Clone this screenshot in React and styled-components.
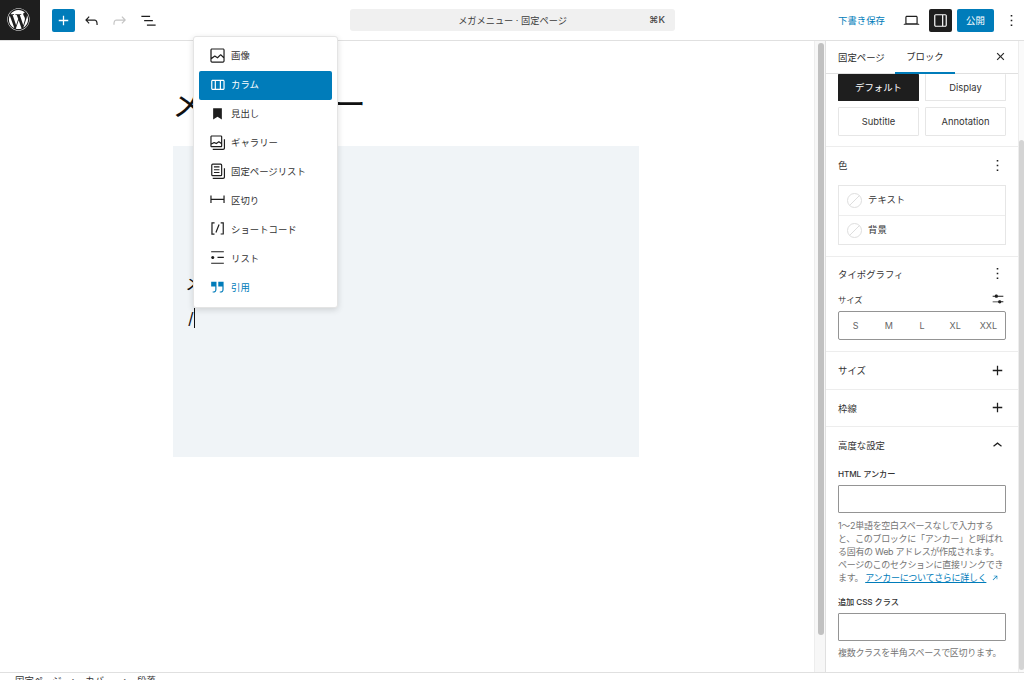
import React from 'react'
import styled, { createGlobalStyle } from 'styled-components'
import { FaWordpress } from 'react-icons/fa'

const GlobalStyle = createGlobalStyle`
    html, body {
        margin: 0;
        padding: 0;
        height: 100%;
        overflow: hidden;
        background: #fff;
    }
    body {
        font-family: 'Inter', 'Noto Sans CJK JP', sans-serif;
        color: #1e1e1e;
    }
    * {
        box-sizing: border-box;
    }
`

const icons = {
    plus: 'M18 11.2h-5.2V6h-1.6v5.2H6v1.6h5.2V18h1.6v-5.2H18z',
    undo: 'M18.3 11.7c-.6-.6-1.4-.9-2.3-.9H6.7l2.9-3.3-1.1-1-4.5 5L8.5 16l1-1-2.7-2.7H16c.5 0 .9.2 1.3.5 1 1 1 3.4 1 4.5v.3h1.5v-.2c0-1.5 0-4.3-1.5-5.7z',
    redo: 'M15.6 6.5l-1.1 1 2.9 3.3H8c-.9 0-1.7.3-2.3.9-1.4 1.5-1.4 4.2-1.4 5.6v.2h1.5v-.3c0-1.1 0-3.5 1-4.5.3-.3.7-.5 1.3-.5h9.2L14.5 15l1.1 1.1 4.6-4.6-4.6-5z',
    listView: 'M3 6h11v1.5H3V6Zm3.5 5.5h11V13h-11v-1.5ZM21 17H10v1.5h11V17Z',
    image: 'M19 3H5c-1.1 0-2 .9-2 2v14c0 1.1.9 2 2 2h14c1.1 0 2-.9 2-2V5c0-1.1-.9-2-2-2zM5 4.5h14c.3 0 .5.2.5.5v8.4l-3-2.9c-.3-.3-.8-.3-1 0L11.9 14 9 12c-.3-.2-.6-.2-.8 0l-3.6 2.6V5c-.1-.3.1-.5.4-.5zm14 15H5c-.3 0-.5-.2-.5-.5v-2.4l4.1-3 3 1.9c.3.2.7.2.9-.1L16 12l3.5 3.4V19c0 .3-.2.5-.5.5z',
    columns: 'M19 6H6c-1.1 0-2 .9-2 2v9c0 1.1.9 2 2 2h13c1.1 0 2-.9 2-2V8c0-1.1-.9-2-2-2zm-4.1 1.5v10H10v-10h4.9zM5.5 17V8c0-.3.2-.5.5-.5h2.5v10H6c-.3 0-.5-.2-.5-.5zm14 0c0 .3-.2.5-.5.5h-2.6v-10H19c.3 0 .5.2.5.5v9z',
    bookmark: 'M6.5 5.5h11v14L12 16l-5.5 3.5z',
    gallery: 'M16.375 4.5H4.625a.125.125 0 0 0-.125.125v8.254l2.859-1.54a.75.75 0 0 1 .68-.016l2.384 1.142 2.89-2.074a.75.75 0 0 1 .874 0l2.313 1.66V4.625a.125.125 0 0 0-.125-.125Zm.125 9.398-2.75-1.975-2.813 2.02a.75.75 0 0 1-.76.067l-2.444-1.17L4.5 14.583v1.792c0 .069.056.125.125.125h11.75a.125.125 0 0 0 .125-.125v-2.477ZM4.625 3C3.728 3 3 3.728 3 4.625v11.75C3 17.273 3.728 18 4.625 18h11.75c.898 0 1.625-.727 1.625-1.625V4.625C18 3.728 17.273 3 16.375 3H4.625ZM20 8v11c0 .69-.31 1-.999 1H6v1.5h13.001c1.52 0 2.499-.982 2.499-2.5V8H20Z',
    pages: 'M14.5 5.5h-7V7h7V5.5ZM7.5 9h7v1.5h-7V9Zm7 3.5h-7V14h7v-1.5ZM16 2H6a2 2 0 0 0-2 2v12a2 2 0 0 0 2 2h10a2 2 0 0 0 2-2V4a2 2 0 0 0-2-2ZM6 3.500h10a.5.5 0 0 1 .5.5v12a.5.5 0 0 1-.5.5H6a.5.5 0 0 1-.5-.5V4a.5.5 0 0 1 .5-.5ZM20 8v11c0 .69-.31 1-.999 1H6v1.5h13.001c1.52 0 2.499-.982 2.499-2.5V8H20Z',
    separator: 'M4.5 12.5v4H3V7h1.5v3.987h15V7H21v9.5h-1.5v-4h-15Z',
    shortcode: 'M16 4.2v1.5h2.5v12.5H16v1.5h4V4.2h-4zM4.2 19.8h4v-1.5H5.8V5.8h2.5V4.2h-4l-.1 15.6zm5.1-3.1l1.4.6 4-10-1.4-.6-4 10z',
    list: 'M4 4v1.5h16V4H4zm8 8.5h8V11h-8v1.5zM4 20h16v-1.5H4V20zm4-8c0-1.1-.9-2-2-2s-2 .9-2 2 .9 2 2 2 2-.9 2-2z',
    quote: 'M13 6v6h5.2v4c0 .8-.2 1.4-.5 1.7-.6.6-1.6.6-2.5.5h-.3v1.5h.5c1 0 2.3-.1 3.3-1 .6-.6 1-1.6 1-2.8V6H13zm-9 6h5.2v4c0 .8-.2 1.4-.5 1.7-.6.6-1.6.6-2.5.5h-.3v1.5h.5c1 0 2.3-.1 3.3-1 .6-.6 1-1.6 1-2.8V6H4v6z',
    laptop: 'M20.5 16h-.7V8c0-1.1-.9-2-2-2H6.2c-1.1 0-2 .9-2 2v8h-.7c-.8 0-1.5.7-1.5 1.5h20c0-.8-.7-1.5-1.5-1.5zM5.700 8c0-.3.2-.5.5-.5h11.6c.3 0 .5.2.5.5v7.6H5.7V8z',
    drawer: 'M18 4H6c-1.1 0-2 .9-2 2v12c0 1.1.9 2 2 2h12c1.1 0 2-.9 2-2V6c0-1.1-.9-2-2-2zm-4 14.5H6c-.3 0-.5-.2-.5-.5V6c0-.3.2-.5.5-.5h8v13zm4.500-.5c0 .3-.2.5-.5.5h-2.5v-13H18c.3 0 .5.2.5.5v12z',
    close: 'M12 13.06l3.712 3.713 1.061-1.06L13.061 12l3.712-3.712-1.06-1.06L12 10.938 8.288 7.227l-1.061 1.06L10.939 12l-3.712 3.712 1.06 1.061L12 13.061z',
    more: 'M13 19h-2v-2h2v2zm0-6h-2v-2h2v2zm0-6h-2V5h2v2z',
    chevronUp: 'M6.5 12.4L12 8l5.5 4.4-.9 1.2L12 10l-4.5 3.6-1-1.2z',
    sliders: 'M14.5 13.8c-1.1 0-2.1.7-2.4 1.8H4V17h8.1c.3 1 1.3 1.8 2.4 1.8s2.1-.7 2.4-1.8H20v-1.5h-3.1c-.3-1-1.3-1.7-2.4-1.7zM11.9 7c-.3-1-1.3-1.8-2.4-1.8S7.4 6 7.1 7H4v1.5h3.1c.3 1 1.3 1.8 2.4 1.8s2.1-.7 2.4-1.8H20V7h-8.1z',
    external: 'M9 6.500h8.500V15H16V9.100l-8.400 8.400-1.100-1.100L14.900 8H9z',
}

const Svg = styled.svg`
    display: block;
    flex: none;
    fill: currentColor;
    width: ${p => p.$size || 19}px;
    height: ${p => p.$size || 19}px;
`

const Icon = ({ name, size }) => (
    <Svg viewBox='0 0 24 24' $size={size}>
        <path d={icons[name]} fillRule='evenodd' clipRule='evenodd' />
    </Svg>
)

const Page = styled.div`
    position: relative;
    width: 1024px;
    height: 680px;
    overflow: hidden;
    display: flex;
    flex-direction: column;
`

const Header = styled.header`
    display: flex;
    align-items: center;
    height: 41px;
    flex: none;
    border-bottom: 1px solid #e0e0e0;
`

const LogoBox = styled.div`
    width: 40px;
    height: 40px;
    flex: none;
    background: #1e1e1e;
    color: #fff;
    display: flex;
    align-items: center;
    justify-content: center;
    padding: 0 4px 2px 0;
`

const LeftTools = styled.div`
    display: flex;
    align-items: center;
    width: 310px;
    flex: none;
    padding-left: 12px;
`

const AddButton = styled.div`
    width: 23px;
    height: 23px;
    background: #007cba;
    color: #fff;
    border-radius: 2px;
    display: flex;
    align-items: center;
    justify-content: center;
    margin-right: 2px;
`

const ToolButton = styled.div`
    width: 28.500px;
    height: 23px;
    display: flex;
    align-items: center;
    justify-content: center;
    color: ${p => (p.$muted ? '#c4c4c4' : '#1e1e1e')};
`

const CommandBar = styled.div`
    width: 325px;
    height: 22px;
    flex: none;
    position: relative;
    background: #f0f0f0;
    border-radius: 3px;
    display: flex;
    align-items: center;
    justify-content: center;
    font-size: 9.2px;
    color: #3c3c3c;
    padding: 0 0 1px 0;
`

const Shortcut = styled.span`
    position: absolute;
    right: 10px;
    top: 5px;
    font-size: 9.5px;
    font-weight: 500;
    color: #444;
`

const RightTools = styled.div`
    flex: 1;
    display: flex;
    align-items: center;
    padding-left: 163px;
`

const SaveLink = styled.span`
    width: 62px;
    flex: none;
    font-size: 9.4px;
    color: #007cba;
`

const IconSquare = styled.div`
    width: 23px;
    height: 23px;
    flex: none;
    margin-left: ${p => p.$left || 0}px;
    display: flex;
    align-items: center;
    justify-content: center;
    border-radius: 2px;
    background: ${p => (p.$active ? '#1e1e1e' : 'transparent')};
    color: ${p => (p.$active ? '#fff' : '#1e1e1e')};
`

const PublishButton = styled.div`
    width: 37px;
    height: 23px;
    flex: none;
    margin: 0 5px;
    background: #007cba;
    color: #fff;
    border-radius: 2px;
    font-size: 9.4px;
    display: flex;
    align-items: center;
    justify-content: center;
`

const Body = styled.div`
    flex: 1;
    min-height: 0;
    display: flex;
`

const Canvas = styled.main`
    flex: 1;
    min-width: 0;
    padding: 44px 0 0 172px;
`

const Title = styled.h1`
    margin: 0 0 21px;
    font-size: 32.3px;
    line-height: 40px;
    font-weight: 400;
    color: #111;
`

const Group = styled.section`
    width: 466px;
    height: 311px;
    margin-left: 1px;
    background: #f0f4f7;
    padding: 121px 0 0 15px;
    font-size: 16px;
    line-height: 34px;
    color: #111;
`

const Paragraph = styled.p`
    margin: 0;
    font-size: ${p => p.$size || 16}px;
    text-indent: ${p => p.$indent || 0}px;
`

const Caret = styled.span`
    border-right: 1px solid #111;
`

const CanvasTrack = styled.div`
    width: 11px;
    flex: none;
    background: #f7f7f7;
    padding: 2px 1px 0 3px;
    border-left: 1px solid #ededed;
`

const CanvasThumb = styled.div`
    height: 592px;
    background: #c1c1c1;
    border-radius: 4px;
`

const Sidebar = styled.aside`
    width: 199px;
    flex: none;
    display: flex;
    border-left: 1px solid #e0e0e0;
`

const SidebarInner = styled.div`
    flex: 1;
    min-width: 0;
    display: flex;
    flex-direction: column;
    border-right: 1px solid #ededed;
`

const SidebarTrack = styled.div`
    width: 5px;
    flex: none;
    padding-top: 99px;
    background: #fafafa;
`

const SidebarThumb = styled.div`
    height: 530px;
    background: #d4d4d4;
    border-radius: 3px;
`

const Tabs = styled.div`
    height: 33px;
    flex: none;
    display: flex;
    align-items: center;
    border-bottom: 1px solid #e0e0e0;
    font-size: 9.4px;
    padding-left: 12px;
    color: #2a2a2a;
`

const Tab = styled.div`
    height: 33px;
    flex: none;
    width: ${p => p.$width}px;
    display: flex;
    align-items: center;
    justify-content: ${p => (p.$active ? 'center' : 'flex-start')};
    border-bottom: ${p => (p.$active ? '2px solid #007cba' : '0')};
    padding-bottom: 1px;
`

const TabClose = styled.div`
    margin-left: auto;
    margin-right: 8px;
    margin-bottom: 2px;
    display: flex;
`

const StylesGrid = styled.div`
    display: grid;
    grid-template-columns: 81px 81px;
    column-gap: 6px;
    row-gap: 6px;
    padding: 0 12px 10px;
    border-bottom: 1px solid #ededed;
    flex: none;
`

const StyleButton = styled.div`
    height: ${p => p.$height}px;
    display: flex;
    align-items: center;
    justify-content: center;
    font-size: 9.4px;
    border: 1px solid ${p => (p.$active ? '#1e1e1e' : '#e6e6e6')};
    border-top-width: ${p => (p.$clipped ? 0 : 1)}px;
    background: ${p => (p.$active ? '#1e1e1e' : '#fff')};
    color: ${p => (p.$active ? '#fff' : '#333')};
    border-radius: 1px;
`

const Panel = styled.section`
    flex: none;
    padding: 0 12px ${p => p.$bottom || 0}px;
    border-bottom: ${p => (p.$last ? '0' : '1px solid #ededed')};
`

const PanelHead = styled.div`
    height: ${p => p.$height || 37}px;
    display: flex;
    align-items: center;
    justify-content: space-between;
    font-size: 9.4px;
    color: #333;
    padding-bottom: 1px;
`

const PanelAction = styled.div`
    width: 19px;
    display: flex;
    justify-content: center;
    margin-right: -1px;
    color: #1e1e1e;
`

const ColorBox = styled.div`
    border: 1px solid #e6e6e6;
    margin-top: 1px;
`

const ColorRow = styled.div`
    height: 29px;
    display: flex;
    align-items: center;
    padding-left: 8px;
    gap: 6px;
    font-size: 9.4px;
    color: #333;
    & + & {
        border-top: 1px solid #ededed;
    }
`

const ColorLabel = styled.span`
    padding-bottom: 3px;
`

const Swatch = styled.span`
    width: 15px;
    height: 15px;
    flex: none;
    border-radius: 50%;
    border: 1px solid #dedede;
    background: linear-gradient(-45deg, transparent 47%, #dedede 47%, #dedede 53%, transparent 53%);
`

const SizeHead = styled.div`
    height: 16px;
    display: flex;
    align-items: center;
    justify-content: space-between;
    font-size: 8.2px;
    color: #333;
    margin-bottom: 4px;
`

const SizeControl = styled.div`
    height: 29px;
    border: 1px solid #949494;
    border-radius: 2px;
    display: grid;
    grid-template-columns: repeat(5, 1fr);
    align-items: center;
    justify-items: center;
    font-size: 9px;
    color: #666;
`

const FieldLabel = styled.div`
    font-size: 8.2px;
    line-height: 12px;
    font-weight: 500;
    letter-spacing: -0.1px;
    color: #333;
    margin: ${p => p.$top || 0}px 0 5px;
`

const TextBox = styled.div`
    height: 28px;
    border: 1px solid #949494;
    border-radius: 1px;
    background: #fff;
`

const Help = styled.p`
    margin: 5.5px 0 0;
    font-size: 9px;
    letter-spacing: -0.3px;
    line-height: 13px;
    white-space: nowrap;
    color: #757575;
    width: 168px;
`

const HelpLink = styled.span`
    color: #007cba;
    text-decoration: underline;
    margin-left: 2px;
`

const InlineIcon = styled.span`
    display: inline-block;
    vertical-align: -2px;
    color: #007cba;
    margin-left: 4px;
`

const Footer = styled.footer`
    height: 8px;
    flex: none;
    overflow: hidden;
    border-top: 1px solid #e0e0e0;
    padding: 2px 0 0 15px;
    display: flex;
    gap: 10px;
    font-size: 9.4px;
    line-height: 12px;
    color: #333;
`

const Menu = styled.div`
    position: absolute;
    left: 193px;
    top: 36px;
    width: 145px;
    height: 272px;
    background: #fff;
    border: 1px solid #e4e4e4;
    border-radius: 3px;
    box-shadow: 0 2px 6px rgba(0, 0, 0, 0.14);
    padding: 5px;
`

const MenuItem = styled.div`
    height: 28.9px;
    display: flex;
    align-items: center;
    gap: 4px;
    padding: 0 0 0 9px;
    border-radius: 2px;
    font-size: 9.4px;
    background: ${p => (p.$active ? '#007cba' : 'transparent')};
    color: ${p => (p.$active ? '#fff' : p.$link ? '#007cba' : '#333')};
`

const MenuLabel = styled.span`
    padding-bottom: 2px;
`

const MenuIcon = styled.span`
    display: flex;
    padding-bottom: 2px;
    color: ${p => (p.$active ? '#fff' : p.$link ? '#007cba' : '#1e1e1e')};
`

const menuItems = [
    { icon: 'image', label: '画像' },
    { icon: 'columns', label: 'カラム', active: true },
    { icon: 'bookmark', label: '見出し' },
    { icon: 'gallery', label: 'ギャラリー' },
    { icon: 'pages', label: '固定ページリスト' },
    { icon: 'separator', label: '区切り' },
    { icon: 'shortcode', label: 'ショートコード' },
    { icon: 'list', label: 'リスト' },
    { icon: 'quote', label: '引用', link: true },
]

export default function App() {
    return (
        <Page>
            <GlobalStyle />
            <Header>
                <LogoBox>
                    <FaWordpress size={23} />
                </LogoBox>
                <LeftTools>
                    <AddButton>
                        <Icon name='plus' size={19} />
                    </AddButton>
                    <ToolButton>
                        <Icon name='undo' />
                    </ToolButton>
                    <ToolButton $muted>
                        <Icon name='redo' />
                    </ToolButton>
                    <ToolButton>
                        <Icon name='listView' />
                    </ToolButton>
                </LeftTools>
                <CommandBar>
                    メガメニュー · 固定ページ
                    <Shortcut>⌘K</Shortcut>
                </CommandBar>
                <RightTools>
                    <SaveLink>下書き保存</SaveLink>
                    <IconSquare>
                        <Icon name='laptop' />
                    </IconSquare>
                    <IconSquare $active $left={6}>
                        <Icon name='drawer' />
                    </IconSquare>
                    <PublishButton>公開</PublishButton>
                    <IconSquare $left={1}>
                        <Icon name='more' />
                    </IconSquare>
                </RightTools>
            </Header>
            <Body>
                <Canvas>
                    <Title>メガメニュー</Title>
                    <Group>
                        <Paragraph $size={18} $indent={-3}>
                            メガメニュー
                        </Paragraph>
                        <Paragraph>
                            <Caret>/</Caret>
                        </Paragraph>
                    </Group>
                </Canvas>
                <CanvasTrack>
                    <CanvasThumb />
                </CanvasTrack>
                <Sidebar>
                    <SidebarInner>
                        <Tabs>
                            <Tab $width={57}>固定ページ</Tab>
                            <Tab $width={60} $active>
                                ブロック
                            </Tab>
                            <TabClose>
                                <Icon name='close' size={19} />
                            </TabClose>
                        </Tabs>
                        <StylesGrid>
                            <StyleButton $active $clipped $height={27}>
                                デフォルト
                            </StyleButton>
                            <StyleButton $clipped $height={27}>
                                Display
                            </StyleButton>
                            <StyleButton $height={29}>Subtitle</StyleButton>
                            <StyleButton $height={29}>Annotation</StyleButton>
                        </StylesGrid>
                        <Panel $bottom={11}>
                            <PanelHead>
                                色
                                <PanelAction>
                                    <Icon name='more' />
                                </PanelAction>
                            </PanelHead>
                            <ColorBox>
                                <ColorRow>
                                    <Swatch />
                                    <ColorLabel>テキスト</ColorLabel>
                                </ColorRow>
                                <ColorRow>
                                    <Swatch />
                                    <ColorLabel>背景</ColorLabel>
                                </ColorRow>
                            </ColorBox>
                        </Panel>
                        <Panel $bottom={11}>
                            <PanelHead $height={34}>
                                タイポグラフィ
                                <PanelAction>
                                    <Icon name='more' />
                                </PanelAction>
                            </PanelHead>
                            <SizeHead>
                                サイズ
                                <PanelAction>
                                    <Icon name='sliders' size={16} />
                                </PanelAction>
                            </SizeHead>
                            <SizeControl>
                                <span>S</span>
                                <span>M</span>
                                <span>L</span>
                                <span>XL</span>
                                <span>XXL</span>
                            </SizeControl>
                        </Panel>
                        <Panel>
                            <PanelHead>
                                サイズ
                                <PanelAction>
                                    <Icon name='plus' />
                                </PanelAction>
                            </PanelHead>
                        </Panel>
                        <Panel>
                            <PanelHead $height={36}>
                                枠線
                                <PanelAction>
                                    <Icon name='plus' />
                                </PanelAction>
                            </PanelHead>
                        </Panel>
                        <Panel $last>
                            <PanelHead>
                                高度な設定
                                <PanelAction>
                                    <Icon name='chevronUp' />
                                </PanelAction>
                            </PanelHead>
                            <FieldLabel $top={4}>HTML アンカー</FieldLabel>
                            <TextBox />
                            <Help>
                                1〜2単語を空白スペースなしで入力する
                                <br />
                                と、このブロックに「アンカー」と呼ばれ
                                <br />
                                る固有の Web アドレスが作成されます。
                                <br />
                                ページのこのセクションに直接リンクでき
                                <br />
                                ます。
                                <HelpLink>アンカーについてさらに詳しく</HelpLink>
                                <InlineIcon>
                                    <Icon name='external' size={10} />
                                </InlineIcon>
                            </Help>
                            <FieldLabel $top={12}>追加 CSS クラス</FieldLabel>
                            <TextBox />
                            <Help>複数クラスを半角スペースで区切ります。</Help>
                        </Panel>
                    </SidebarInner>
                    <SidebarTrack>
                        <SidebarThumb />
                    </SidebarTrack>
                </Sidebar>
            </Body>
            <Footer>
                <span>固定ページ</span>
                <span>›</span>
                <span>カバー</span>
                <span>›</span>
                <span>段落</span>
            </Footer>
            <Menu>
                {menuItems.map(item => (
                    <MenuItem key={item.label} $active={item.active} $link={item.link}>
                        <MenuIcon $active={item.active} $link={item.link}>
                            <Icon name={item.icon} />
                        </MenuIcon>
                        <MenuLabel>{item.label}</MenuLabel>
                    </MenuItem>
                ))}
            </Menu>
        </Page>
    )
}
